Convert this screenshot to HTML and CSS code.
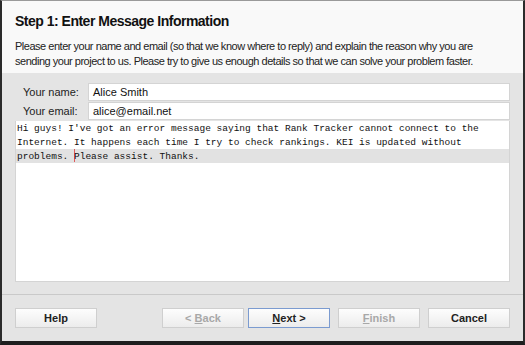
FILE: index.html
```html
<!DOCTYPE html>
<html lang="en">
<head>
<meta charset="UTF-8">
<title>Step 1: Enter Message Information</title>
<link rel="stylesheet" href="styles.css">
</head>
<body>
<div class="window">
  <div class="header">
    <h1 class="title">Step 1: Enter Message Information</h1>
    <p class="intro">Please enter your name and email (so that we know where to reply) and explain the reason why you are sending your project to us. Please try to give us enough details so that we can solve your problem faster.</p>
  </div>

  <div class="content">
    <div class="panel">
      <div class="field-row">
        <label class="field-label" for="name">Your name:</label>
        <div class="field-input" id="name">Alice Smith</div>
      </div>
      <div class="field-row">
        <label class="field-label" for="email">Your email:</label>
        <div class="field-input" id="email">alice@email.net</div>
      </div>
      <div class="message">
        <div class="msg-line">Hi guys! I've got an error message saying that Rank Tracker cannot connect to the</div>
        <div class="msg-line">Internet. It happens each time I try to check rankings. KEI is updated without</div>
        <div class="msg-line current">problems. <span class="caret"></span>Please assist. Thanks.</div>
      </div>
    </div>
  </div>

  <div class="footer">
    <button class="btn">Help</button>
    <div class="nav">
      <button class="btn disabled">&lt; <u>B</u>ack</button>
      <button class="btn default"><u>N</u>ext &gt;</button>
      <button class="btn disabled spaced"><u>F</u>inish</button>
      <button class="btn spaced">Cancel</button>
    </div>
  </div>
</div>
</body>
</html>
```

FILE: styles.css
```css
body {
    margin: 0;
    background: #1e1e1e;
    font-family: "Liberation Sans", Arial, sans-serif;
}
.window {
    width: 525px;
    height: 345px;
    box-sizing: border-box;
    border-top: 1px solid #9a9a9a;
    border-left: 2px solid #2b2b2b;
    border-right: 2px solid #2b2b2b;
    border-bottom: 4px solid #1e1e1e;
    background: #e4e4e4;
    display: flex;
    flex-direction: column;
}
.header {
    height: 72px;
    box-sizing: border-box;
    background: #f9f9f9;
    padding: 12px 13px 0 13px;
}
.title {
    margin: 0;
    font-size: 14px;
    font-weight: bold;
    color: #111;
    line-height: 17px;
    letter-spacing: -0.5px;
}
.intro {
    margin: 9px 0 0 0;
    font-size: 11px;
    line-height: 15px;
    color: #222;
    letter-spacing: -0.48px;
}
.content {
    height: 222px;
    box-sizing: border-box;
    padding: 10px 13px 13px 13px;
    border-bottom: 1px solid #c9c9c9;
}
.panel {
    height: 199px;
    display: flex;
    flex-direction: column;
}
.field-row {
    display: flex;
    height: 18px;
    margin-bottom: 1px;
}
.field-label {
    width: 73px;
    padding-left: 8px;
    box-sizing: border-box;
    font-size: 11px;
    line-height: 18px;
    color: #222;
}
.field-input {
    flex: 1;
    background: #fff;
    border: 1px solid #d4d4d4;
    box-sizing: border-box;
    padding-left: 4px;
    font-size: 11px;
    line-height: 16px;
    color: #111;
}
.message {
    flex: 1;
    background: #fff;
    border: 1px solid #d4d4d4;
    border-top: none;
    font-family: "Liberation Mono", "Courier New", monospace;
    font-size: 9.5px;
    color: #111;
}
.msg-line {
    height: 14px;
    line-height: 15px;
    padding-left: 1px;
    white-space: pre;
}
.msg-line.current {
    background: #e2e2e2;
}
.caret {
    display: inline-block;
    width: 1px;
    height: 13px;
    margin-right: -1px;
    background: #e05a5a;
    vertical-align: -3px;
}
.footer {
    flex: 1;
    display: flex;
    align-items: flex-start;
    padding: 13px 13px 0 13px;
}
.nav {
    margin-left: auto;
    display: flex;
    gap: 4px;
}
.btn {
    width: 82px;
    height: 20px;
    padding: 0;
    border: 1px solid #cfcfcf;
    background: linear-gradient(#fdfdfd, #ececec);
    font-family: "Liberation Sans", Arial, sans-serif;
    font-size: 11px;
    font-weight: bold;
    color: #222;
}
.btn.disabled {
    color: #a8a8a8;
}
.btn.default {
    border-color: #7b9bd0;
}
.btn.spaced {
    margin-left: 4px;
}
```
